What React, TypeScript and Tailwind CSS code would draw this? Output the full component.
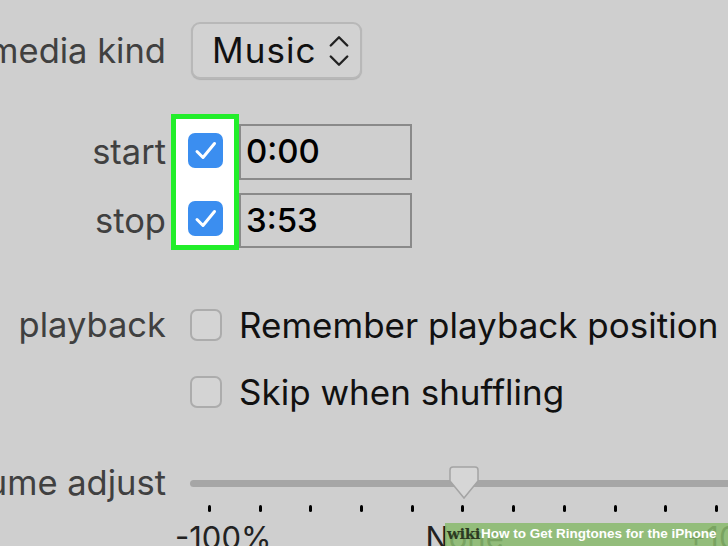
const Label = ({ text }: { text: string }) => (
    <div className="w-[166px] shrink-0 flex justify-end whitespace-nowrap text-[34.5px] text-[#404040]">
        {text}
    </div>
);

const Check = () => (
    <div className="w-[35px] h-[35px] rounded-[7px] bg-[#3b8ef0] flex items-center justify-center">
        <svg viewBox="0 0 35 35" className="w-[35px] h-[35px]" fill="none" stroke="white" strokeWidth={3} strokeLinecap="round" strokeLinejoin="round">
            <path d="M9 18.5 15 24.5 26.5 10.5" />
        </svg>
    </div>
);

const Box = () => (
    <div className="w-[32px] h-[32px] rounded-[7px] border-2 border-[#acacac] bg-[#d4d4d4] shrink-0" />
);

const ticks = [0, 1, 2, 3, 4, 5, 6, 7, 8, 9, 10];

export default function App() {
    return (
        <div className="relative w-[728px] h-[546px] overflow-hidden bg-[#cfcfcf] font-['Inter','Liberation_Sans',sans-serif]">
            {/* media kind */}
            <div className="flex items-center h-[57px] mt-[22px]">
                <Label text="media kind" />
                <div className="ml-[25px] w-[171px] h-[57px] rounded-[9px] border-2 border-[#b8b8b8] bg-[#d2d2d2] shadow-[0_1px_1px_rgba(0,0,0,0.15)] flex items-center pl-[19px] pr-[10px] justify-between">
                    <span className="text-[35px] tracking-[0.03em] text-[#111]">Music</span>
                    <svg viewBox="0 0 24 36" className="w-[22px] h-[34px]" fill="none" stroke="#222" strokeWidth={2.6} strokeLinecap="round" strokeLinejoin="round">
                        <path d="M3 12 12 3 21 12" />
                        <path d="M3 24 12 33 21 24" />
                    </svg>
                </div>
            </div>

            {/* start / stop */}
            <div className="flex mt-[35px]">
                <div className="flex flex-col">
                    <div className="h-[56px] mt-[10px] flex items-center"><Label text="start" /></div>
                    <div className="h-[55px] mt-[13px] flex items-center"><Label text="stop" /></div>
                </div>
                <div className="ml-[5px] w-[68px] h-[136px] border-[5px] border-[#22ee2a] bg-white flex flex-col items-center pt-[14px] gap-[33px]">
                    <Check />
                    <Check />
                </div>
                <div className="flex flex-col">
                    <div className="w-[173px] h-[56px] mt-[10px] border-2 border-[#8a8a8a] flex items-center pl-[5px] text-[33px] font-medium text-black">0:00</div>
                    <div className="w-[173px] h-[55px] mt-[13px] border-2 border-[#8a8a8a] flex items-center pl-[5px] text-[33px] font-medium text-black">3:53</div>
                </div>
            </div>

            {/* playback */}
            <div className="flex items-center h-[44px] mt-[53px]">
                <Label text="playback" />
                <div className="ml-[24px] flex items-center gap-[17px] whitespace-nowrap">
                    <Box />
                    <span className="text-[35px] text-[#111]">Remember playback position</span>
                </div>
            </div>
            <div className="flex items-center h-[44px] mt-[23px]">
                <div className="w-[166px] shrink-0" />
                <div className="ml-[24px] flex items-center gap-[17px] whitespace-nowrap">
                    <Box />
                    <span className="text-[35px] text-[#111]">Skip when shuffling</span>
                </div>
            </div>

            {/* volume adjust */}
            <div className="flex items-center h-[40px] mt-[49px]">
                <Label text="volume adjust" />
                <div className="relative ml-[24px] flex-1 h-[40px] flex items-center">
                    <div className="w-[600px] h-[7px] rounded-full bg-[#a6a6a6]" />
                    <svg viewBox="0 0 32 36" className="absolute left-[258px] top-[2px] w-[32px] h-[36px]">
                        <path d="M5 2 H27 Q30 2 30 5 V16 L16 33 L2 16 V5 Q2 2 5 2 Z" fill="#d6d6d6" stroke="#a4a4a4" strokeWidth={1.5} />
                    </svg>
                </div>
            </div>
            <div className="flex ml-[208px] mt-[2px]">
                {ticks.map((t) => (
                    <div key={t} className="w-[50.7px] shrink-0">
                        <div className="w-[3px] h-[7px] rounded-full bg-black" />
                    </div>
                ))}
            </div>
            <div className="flex ml-[175px] mt-[3px] text-[31px] text-[#222] whitespace-nowrap">
                <span>-100%</span>
                <span className="ml-[154px]">None</span>
                <span className="ml-[182px]">+100%</span>
            </div>

            {/* watermark */}
            <div className="absolute left-[445px] top-[523px] w-[283px] h-[23px] bg-[rgba(136,186,108,0.85)] flex items-center pl-[2px] whitespace-nowrap">
                <span className="font-['DejaVu_Serif',serif] font-bold text-[15px] text-[#2c3a22] tracking-[-0.03em]">wiki</span>
                <span className="font-['Liberation_Sans',sans-serif] text-[13.5px] font-bold text-white ml-[1px]">How to Get Ringtones for the iPhone</span>
            </div>
        </div>
    );
}
